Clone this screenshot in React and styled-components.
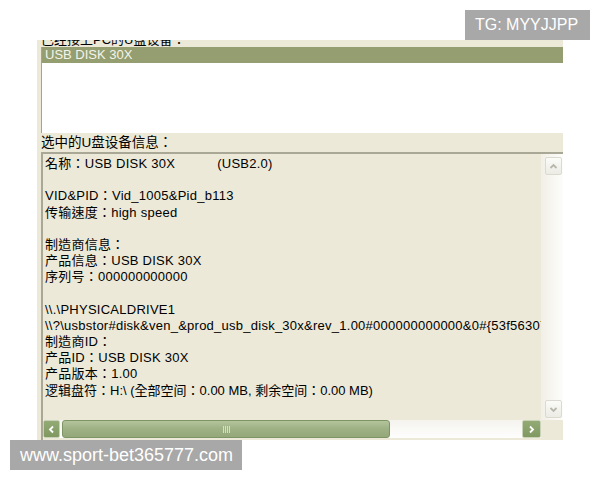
import React from 'react';
import styled, { createGlobalStyle } from 'styled-components';

const GlobalStyle = createGlobalStyle`
  html, body {
    margin: 0;
    padding: 0;
    background: #fff;
  }
  body {
    font-family: "Liberation Sans", "Noto Sans CJK TC", "Noto Sans CJK SC", sans-serif;
  }
`;

const Page = styled.div`
  position: relative;
  width: 600px;
  height: 480px;
  overflow: hidden;
  padding-top: 40px;
  box-sizing: border-box;
`;

const Frame = styled.div`
  margin-left: 37px;
  width: 526px;
  height: 400px;
  background: #ece9d8;
  display: flex;
  flex-direction: column;
  overflow: hidden;
  font-size: 13px;
  color: #000;
`;

const ClippedLabel = styled.div`
  height: 7px;
  overflow: hidden;
  padding-left: 4px;
  flex-shrink: 0;

  span {
    display: block;
    line-height: 14px;
    margin-top: -7px;
  }
`;

const ListBox = styled.div`
  margin-left: 4px;
  height: 86px;
  flex-shrink: 0;
  background: #fff;
  border-left: 1px solid #a5a393;
`;

const ListRow = styled.div`
  height: 16px;
  line-height: 16px;
  padding-left: 3px;
  background: ${({ selected }) => (selected ? '#959e70' : 'transparent')};
  color: ${({ selected }) => (selected ? '#f4f4ea' : '#000')};
`;

const SectionLabel = styled.div`
  height: 19px;
  line-height: 20px;
  padding-left: 4px;
  flex-shrink: 0;
  font-size: 13.5px;
`;

const InfoBox = styled.div`
  margin-left: 4px;
  flex: 1;
  min-height: 0;
  display: grid;
  grid-template-columns: 1fr 22px;
  grid-template-rows: 1fr 18px;
  border-top: 2px solid #a9a795;
  border-left: 2px solid #a9a795;
  padding-bottom: 2px;
  background: #ece9d8;
`;

const InfoText = styled.div`
  padding: 2px 0 0 2px;
  line-height: 16.2px;
  white-space: pre;
  overflow: hidden;
`;

const Line = styled.div`
  height: 16.2px;
  letter-spacing: ${({ spacing }) => spacing}px;
`;

const Tab = styled.span`
  display: inline-block;
  width: ${({ w }) => w}px;
`;

const VScroll = styled.div`
  background: linear-gradient(to right, #f1efe6, #fdfdfb);
  display: flex;
  flex-direction: column;
  justify-content: space-between;
  padding: 3px 0 2px 4px;
`;

const PaleButton = styled.div`
  width: 17px;
  height: 18px;
  box-sizing: border-box;
  border: 1px solid #dcdad0;
  border-radius: 2px;
  background: linear-gradient(to bottom, #fbfbf8, #ecebe4);
  display: flex;
  align-items: center;
  justify-content: center;
`;

const HScroll = styled.div`
  display: flex;
  align-items: stretch;
  background: linear-gradient(to bottom, #f4f3ee, #fefefd);
`;

const GreenButton = styled.div`
  width: ${({ w }) => w}px;
  flex-shrink: 0;
  box-sizing: border-box;
  border: 1px solid #c8d2b8;
  border-radius: 2px;
  background: linear-gradient(to bottom, #93aa74, #7f9961);
  display: flex;
  align-items: center;
  justify-content: center;
`;

const Thumb = styled.div`
  width: 328px;
  margin-left: 2px;
  box-sizing: border-box;
  border: 1px solid #7d9464;
  border-radius: 3px;
  background: linear-gradient(to bottom, #b4c49c, #9fb286 45%, #93a779);
  display: flex;
  align-items: center;
  justify-content: center;
  gap: 1px;
`;

const Grip = styled.i`
  width: 1px;
  height: 7px;
  background: #d6dfc6;
`;

const Track = styled.div`
  flex: 1;
`;

const Corner = styled.div`
  background: #ece9d8;
`;

const Badge = styled.div`
  position: absolute;
  background: #a8a8a8;
  color: #fff;
  font-family: "Liberation Sans", sans-serif;
  line-height: 30px;
  height: 30px;
  white-space: nowrap;
  box-sizing: border-box;
`;

const TopBadge = styled(Badge)`
  top: 10px;
  left: 465px;
  width: 125px;
  padding-left: 10px;
  font-size: 16px;
`;

const BottomBadge = styled(Badge)`
  top: 440px;
  left: 10px;
  width: 232px;
  padding-left: 10px;
  font-size: 18px;
`;

const Chevron = ({ dir, color, size = 9 }) => {
  const pts = {
    up: '1.5,6 4.5,3 7.5,6',
    down: '1.5,3 4.5,6 7.5,3',
    left: '6,1.5 3,4.5 6,7.5',
    right: '3,1.5 6,4.5 3,7.5',
  }[dir];
  return (
    <svg width={size} height={size} viewBox="0 0 9 9">
      <polyline points={pts} fill="none" stroke={color} strokeWidth="1.8" />
    </svg>
  );
};

const lines = [
  [<>名称：USB DISK 30X<Tab w={42} />(USB2.0)</>, 0.25],
  ['', 0],
  ['VID&PID：Vid_1005&Pid_b113', 0.25],
  ['传输速度：high speed', 0.25],
  ['', 0],
  ['制造商信息：', 0.25],
  ['产品信息：USB DISK 30X', 0.25],
  ['序列号：000000000000', 0.25],
  ['', 0],
  ['\\\\.\\PHYSICALDRIVE1', 0.25],
  ['\\\\?\\usbstor#disk&ven_&prod_usb_disk_30x&rev_1.00#000000000000&0#{53f56307-b6bf-11d0}', 0.25],
  ['制造商ID：', 0.25],
  ['产品ID：USB DISK 30X', 0.25],
  ['产品版本：1.00', 0.25],
  ['逻辑盘符：H:\\ (全部空间：0.00 MB, 剩余空间：0.00 MB)', 0],
];

export default function App() {
  return (
    <>
      <GlobalStyle />
      <Page>
        <Frame>
          <ClippedLabel>
            <span>已经接上PC的U盘设备：</span>
          </ClippedLabel>
          <ListBox>
            <ListRow selected>USB DISK 30X</ListRow>
          </ListBox>
          <SectionLabel>选中的U盘设备信息：</SectionLabel>
          <InfoBox>
            <InfoText>
              {lines.map(([text, spacing], i) => (
                <Line key={i} spacing={spacing}>{text}</Line>
              ))}
            </InfoText>
            <VScroll>
              <PaleButton>
                <Chevron dir="up" color="#b9b7ac" />
              </PaleButton>
              <PaleButton>
                <Chevron dir="down" color="#b9b7ac" />
              </PaleButton>
            </VScroll>
            <HScroll>
              <GreenButton w={17}>
                <Chevron dir="left" color="#fff" />
              </GreenButton>
              <Thumb>
                <Grip />
                <Grip />
                <Grip />
                <Grip />
              </Thumb>
              <Track />
              <GreenButton w={19}>
                <Chevron dir="right" color="#fff" />
              </GreenButton>
            </HScroll>
            <Corner />
          </InfoBox>
        </Frame>
        <TopBadge>TG: MYYJJPP</TopBadge>
        <BottomBadge>www.sport-bet365777.com</BottomBadge>
      </Page>
    </>
  );
}
